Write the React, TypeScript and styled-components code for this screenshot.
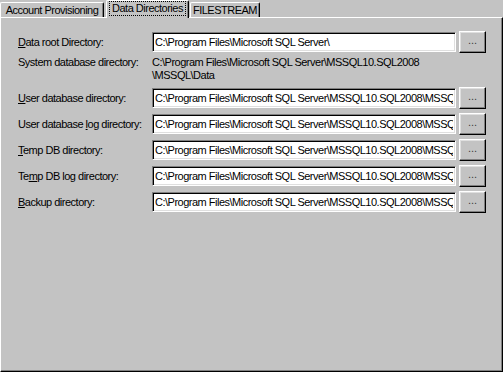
import React from 'react';
import styled, { createGlobalStyle } from 'styled-components';

const GlobalStyle = createGlobalStyle`
    html, body {
        margin: 0;
        padding: 0;
        background: #c3c3c3;
    }
    body {
        font-family: "Liberation Sans", Arial, sans-serif;
        font-size: 11px;
        letter-spacing: -0.5px;
        color: #000;
    }
`;

const StyledWindow = styled.div`
    width: 503px;
    height: 372px;
    display: flex;
    flex-direction: column;
    background: #c3c3c3;
    overflow: hidden;
`;

const StyledTabStrip = styled.div`
    display: flex;
    flex-direction: row;
    align-items: flex-end;
    height: 17px;
    position: relative;
    z-index: 1;
`;

const StyledTab = styled.div<{ $active?: boolean; $width: number }>`
    box-sizing: border-box;
    width: ${p => p.$width}px;
    height: ${p => (p.$active ? 18 : 15)}px;
    margin-bottom: ${p => (p.$active ? -1 : 0)}px;
    margin-right: ${p => (p.$active ? 1 : 2)}px;
    display: flex;
    align-items: center;
    justify-content: center;
    background: #c3c3c3;
    border-top: 1px solid #fff;
    border-left: 1px solid #fff;
    border-right: 1px solid #000;
    box-shadow: inset -1px 0 0 #808080;
    border-radius: 2px 2px 0 0;
    padding-bottom: ${p => (p.$active ? 3 : 0)}px;
    white-space: nowrap;
`;

const StyledFocus = styled.span`
    outline: 1px dotted #000;
    outline-offset: 0;
    padding: 0 2px;
    line-height: 13px;
`;

const StyledPanel = styled.div`
    flex: 1;
    box-sizing: border-box;
    border-top: 1px solid #fff;
    border-left: 1px solid #fff;
    border-right: 1px solid #000;
    border-bottom: 1px solid #000;
    box-shadow: inset -1px -1px 0 #808080;
    padding: 13px 0 0 17px;
    display: flex;
    flex-direction: column;
`;

const StyledRow = styled.div<{ $height: number; $gap: number }>`
    display: grid;
    grid-template-columns: 131px 304px 27px;
    column-gap: 3px;
    align-items: center;
    height: ${p => p.$height}px;
    margin-bottom: ${p => p.$gap}px;
`;

const StyledLabel = styled.div<{ $top?: boolean }>`
    white-space: nowrap;
    line-height: 13px;
    align-self: ${p => (p.$top ? 'start' : 'center')};
`;

const StyledStatic = styled.div`
    line-height: 13px;
    align-self: start;
    grid-column: 2 / span 2;
`;

const StyledTextBox = styled.input`
    box-sizing: border-box;
    width: 304px;
    height: 20px;
    margin: 0;
    padding: 0 2px;
    font-family: "Liberation Sans", Arial, sans-serif;
    font-size: 11px;
    letter-spacing: -0.5px;
    color: #000;
    background: #fff;
    border-style: solid;
    border-width: 1px;
    border-color: #808080 #fff #fff #808080;
    box-shadow: inset 1px 1px 0 #000, inset -1px -1px 0 #dfdfdf;
    outline: none;
`;

const StyledButton = styled.button`
    box-sizing: border-box;
    width: 27px;
    height: 22px;
    margin: 0;
    padding: 0 0 3px;
    font-family: "Liberation Sans", Arial, sans-serif;
    font-size: 11px;
    color: #404040;
    background: #c3c3c3;
    border-style: solid;
    border-width: 1px;
    border-color: #fff #000 #000 #fff;
    box-shadow: inset -1px -1px 0 #808080, inset 1px 1px 0 #dfdfdf;
    line-height: 11px;
`;

const Key = styled.span`
    text-decoration: underline;
    text-underline-offset: 1px;
`;

const longPath = 'C:\\Program Files\\Microsoft SQL Server\\MSSQL10.SQL2008\\MSSQL\\Data';

type DirRow = { label: React.ReactNode; value: string };

const rows: DirRow[] = [
    { label: <><Key>U</Key>ser database directory:</>, value: longPath },
    { label: <>User database <Key>l</Key>og directory:</>, value: longPath },
    { label: <><Key>T</Key>emp DB directory:</>, value: longPath },
    { label: <>Te<Key>m</Key>p DB log directory:</>, value: longPath },
    { label: <><Key>B</Key>ackup directory:</>, value: longPath + '\\Backup' },
];

function App() {
    return (
        <StyledWindow>
            <GlobalStyle />
            <StyledTabStrip>
                <StyledTab $width={104}>Account Provisioning</StyledTab>
                <StyledTab $active $width={83}>
                    <StyledFocus>Data Directories</StyledFocus>
                </StyledTab>
                <StyledTab $width={70}>FILESTREAM</StyledTab>
            </StyledTabStrip>
            <StyledPanel>
                <StyledRow $height={22} $gap={3}>
                    <StyledLabel><Key>D</Key>ata root Directory:</StyledLabel>
                    <StyledTextBox readOnly value="C:\Program Files\Microsoft SQL Server\" />
                    <StyledButton>...</StyledButton>
                </StyledRow>
                <StyledRow $height={26} $gap={5}>
                    <StyledLabel $top>System database directory:</StyledLabel>
                    <StyledStatic>
                        C:\Program Files\Microsoft SQL Server\MSSQL10.SQL2008<br />\MSSQL\Data
                    </StyledStatic>
                </StyledRow>
                {rows.map((row, index) => (
                    <StyledRow key={index} $height={22} $gap={4}>
                        <StyledLabel>{row.label}</StyledLabel>
                        <StyledTextBox readOnly value={row.value} />
                        <StyledButton>...</StyledButton>
                    </StyledRow>
                ))}
            </StyledPanel>
        </StyledWindow>
    );
}

export default App;
